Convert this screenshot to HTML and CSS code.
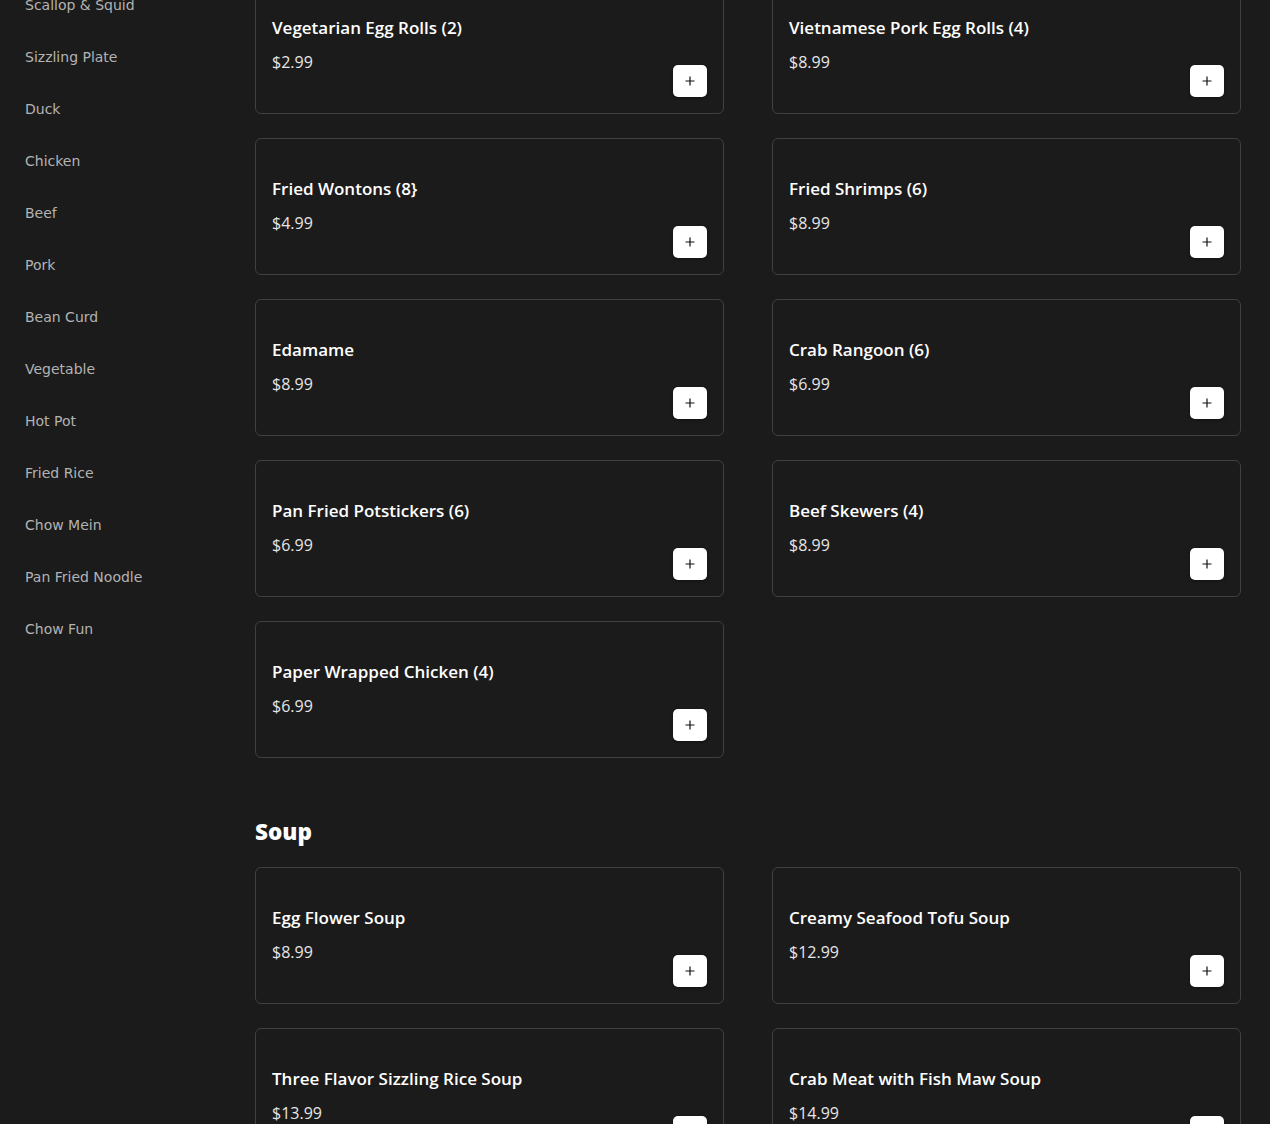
FILE: index.html
```html
<!DOCTYPE html>
<html lang="en">
<head>
    <meta charset="UTF-8">
    <meta name="viewport" content="width=device-width, initial-scale=1.0">
    <title>Menu</title>
    <link rel="stylesheet" href="styles.css">
</head>
<body>
    <div class="layout">
        <aside class="sidebar">
            <ul class="cat-list">
                <li><a href="#appetizers">Appetizers</a></li>
                <li><a href="#soup">Soup</a></li>
                <li><a href="#">Chef's Specials</a></li>
                <li><a href="#">Lobster &amp; Crab</a></li>
                <li><a href="#">Fish</a></li>
                <li><a href="#">Shrimp</a></li>
                <li><a href="#">Clam &amp; Oyster</a></li>
                <li><a href="#">Scallop &amp; Squid</a></li>
                <li><a href="#">Sizzling Plate</a></li>
                <li><a href="#">Duck</a></li>
                <li><a href="#">Chicken</a></li>
                <li><a href="#">Beef</a></li>
                <li><a href="#">Pork</a></li>
                <li><a href="#">Bean Curd</a></li>
                <li><a href="#">Vegetable</a></li>
                <li><a href="#">Hot Pot</a></li>
                <li><a href="#">Fried Rice</a></li>
                <li><a href="#">Chow Mein</a></li>
                <li><a href="#">Pan Fried Noodle</a></li>
                <li><a href="#">Chow Fun</a></li>
            </ul>
        </aside>

        <main class="menu">
            <section class="menu-section" id="appetizers">
                <h2>Appetizers</h2>
                <div class="item-grid">
                    <div class="item-card"><div class="item-info"><h3>Spring Rolls (2)</h3><p>$2.99</p></div><button class="add-btn"><svg viewBox="0 0 10 10" width="10" height="10"><path d="M5 0.5v9M0.5 5h9" stroke="#111" stroke-width="1.2"/></svg></button></div>
                    <div class="item-card"><div class="item-info"><h3>Shrimp Egg Rolls (2)</h3><p>$5.99</p></div><button class="add-btn"><svg viewBox="0 0 10 10" width="10" height="10"><path d="M5 0.5v9M0.5 5h9" stroke="#111" stroke-width="1.2"/></svg></button></div>
                    <div class="item-card"><div class="item-info"><h3>Chicken Wings (6)</h3><p>$9.99</p></div><button class="add-btn"><svg viewBox="0 0 10 10" width="10" height="10"><path d="M5 0.5v9M0.5 5h9" stroke="#111" stroke-width="1.2"/></svg></button></div>
                    <div class="item-card"><div class="item-info"><h3>Salt &amp; Pepper Wings (6)</h3><p>$10.99</p></div><button class="add-btn"><svg viewBox="0 0 10 10" width="10" height="10"><path d="M5 0.5v9M0.5 5h9" stroke="#111" stroke-width="1.2"/></svg></button></div>
                    <div class="item-card"><div class="item-info"><h3>Vegetarian Egg Rolls (2)</h3><p>$2.99</p></div><button class="add-btn"><svg viewBox="0 0 10 10" width="10" height="10"><path d="M5 0.5v9M0.5 5h9" stroke="#111" stroke-width="1.2"/></svg></button></div>
                    <div class="item-card"><div class="item-info"><h3>Vietnamese Pork Egg Rolls (4)</h3><p>$8.99</p></div><button class="add-btn"><svg viewBox="0 0 10 10" width="10" height="10"><path d="M5 0.5v9M0.5 5h9" stroke="#111" stroke-width="1.2"/></svg></button></div>
                    <div class="item-card"><div class="item-info"><h3>Fried Wontons (8}</h3><p>$4.99</p></div><button class="add-btn"><svg viewBox="0 0 10 10" width="10" height="10"><path d="M5 0.5v9M0.5 5h9" stroke="#111" stroke-width="1.2"/></svg></button></div>
                    <div class="item-card"><div class="item-info"><h3>Fried Shrimps (6)</h3><p>$8.99</p></div><button class="add-btn"><svg viewBox="0 0 10 10" width="10" height="10"><path d="M5 0.5v9M0.5 5h9" stroke="#111" stroke-width="1.2"/></svg></button></div>
                    <div class="item-card"><div class="item-info"><h3>Edamame</h3><p>$8.99</p></div><button class="add-btn"><svg viewBox="0 0 10 10" width="10" height="10"><path d="M5 0.5v9M0.5 5h9" stroke="#111" stroke-width="1.2"/></svg></button></div>
                    <div class="item-card"><div class="item-info"><h3>Crab Rangoon (6)</h3><p>$6.99</p></div><button class="add-btn"><svg viewBox="0 0 10 10" width="10" height="10"><path d="M5 0.5v9M0.5 5h9" stroke="#111" stroke-width="1.2"/></svg></button></div>
                    <div class="item-card"><div class="item-info"><h3>Pan Fried Potstickers (6)</h3><p>$6.99</p></div><button class="add-btn"><svg viewBox="0 0 10 10" width="10" height="10"><path d="M5 0.5v9M0.5 5h9" stroke="#111" stroke-width="1.2"/></svg></button></div>
                    <div class="item-card"><div class="item-info"><h3>Beef Skewers (4)</h3><p>$8.99</p></div><button class="add-btn"><svg viewBox="0 0 10 10" width="10" height="10"><path d="M5 0.5v9M0.5 5h9" stroke="#111" stroke-width="1.2"/></svg></button></div>
                    <div class="item-card"><div class="item-info"><h3>Paper Wrapped Chicken (4)</h3><p>$6.99</p></div><button class="add-btn"><svg viewBox="0 0 10 10" width="10" height="10"><path d="M5 0.5v9M0.5 5h9" stroke="#111" stroke-width="1.2"/></svg></button></div>
                </div>
            </section>

            <section class="menu-section" id="soup">
                <h2>Soup</h2>
                <div class="item-grid">
                    <div class="item-card"><div class="item-info"><h3>Egg Flower Soup</h3><p>$8.99</p></div><button class="add-btn"><svg viewBox="0 0 10 10" width="10" height="10"><path d="M5 0.5v9M0.5 5h9" stroke="#111" stroke-width="1.2"/></svg></button></div>
                    <div class="item-card"><div class="item-info"><h3>Creamy Seafood Tofu Soup</h3><p>$12.99</p></div><button class="add-btn"><svg viewBox="0 0 10 10" width="10" height="10"><path d="M5 0.5v9M0.5 5h9" stroke="#111" stroke-width="1.2"/></svg></button></div>
                    <div class="item-card"><div class="item-info"><h3>Three Flavor Sizzling Rice Soup</h3><p>$13.99</p></div><button class="add-btn"><svg viewBox="0 0 10 10" width="10" height="10"><path d="M5 0.5v9M0.5 5h9" stroke="#111" stroke-width="1.2"/></svg></button></div>
                    <div class="item-card"><div class="item-info"><h3>Crab Meat with Fish Maw Soup</h3><p>$14.99</p></div><button class="add-btn"><svg viewBox="0 0 10 10" width="10" height="10"><path d="M5 0.5v9M0.5 5h9" stroke="#111" stroke-width="1.2"/></svg></button></div>
                    <div class="item-card"><div class="item-info"><h3>Wonton Soup</h3><p>$8.99</p></div><button class="add-btn"><svg viewBox="0 0 10 10" width="10" height="10"><path d="M5 0.5v9M0.5 5h9" stroke="#111" stroke-width="1.2"/></svg></button></div>
                    <div class="item-card"><div class="item-info"><h3>Hot &amp; Sour Soup</h3><p>$8.99</p></div><button class="add-btn"><svg viewBox="0 0 10 10" width="10" height="10"><path d="M5 0.5v9M0.5 5h9" stroke="#111" stroke-width="1.2"/></svg></button></div>
                </div>
            </section>
        </main>
    </div>

    <script>
        // keep the menu at the same spot as the reference view
        window.scrollTo(0, 420);
    </script>
</body>
</html>
```

FILE: styles.css
```css
body {
    margin: 0;
    padding: 0;
    background-color: #1b1b1b;
    color: #fff;
    font-family: "DejaVu Sans", sans-serif;
}
.layout {
    display: grid;
    grid-template-columns: 255px 1fr;
    padding-right: 29px;
    padding-bottom: 400px;
}
.sidebar {
    padding-top: 35px;
}
.cat-list {
    list-style: none;
    margin: 0;
    padding: 0 0 0 25px;
}
.cat-list li {
    line-height: 52px;
}
.cat-list a {
    color: #b3b3b3;
    font-size: 14px;
    text-decoration: none;
}
.menu {
    padding-top: 24px;
}
.menu-section + .menu-section {
    margin-top: 58px;
}
.menu-section h2 {
    margin: 0 0 19px;
    font-family: "Open Sans", sans-serif;
    font-weight: 800;
    font-size: 22.5px;
    line-height: 32px;
}
.item-grid {
    display: grid;
    grid-template-columns: 1fr 1fr;
    column-gap: 48px;
    row-gap: 24px;
}
.item-card {
    display: flex;
    justify-content: space-between;
    align-items: flex-end;
    box-sizing: border-box;
    height: 137px;
    padding: 16px;
    border: 1px solid #404040;
    border-radius: 6px;
}
.item-info {
    align-self: flex-start;
    padding-top: 22px;
}
.item-info h3 {
    margin: 0;
    font-family: "Open Sans", sans-serif;
    font-weight: 600;
    font-size: 17px;
    line-height: 24px;
    color: #fff;
}
.item-info p {
    margin: 10px 0 0;
    font-family: "Open Sans", sans-serif;
    font-size: 16px;
    line-height: 24px;
    color: #e6e6e6;
}
.add-btn {
    display: flex;
    align-items: center;
    justify-content: center;
    width: 34px;
    height: 32px;
    padding: 0;
    border: none;
    border-radius: 5px;
    background-color: #fff;
    box-shadow: 0 1px 3px rgba(0, 0, 0, 0.4);
    cursor: pointer;
}
```
